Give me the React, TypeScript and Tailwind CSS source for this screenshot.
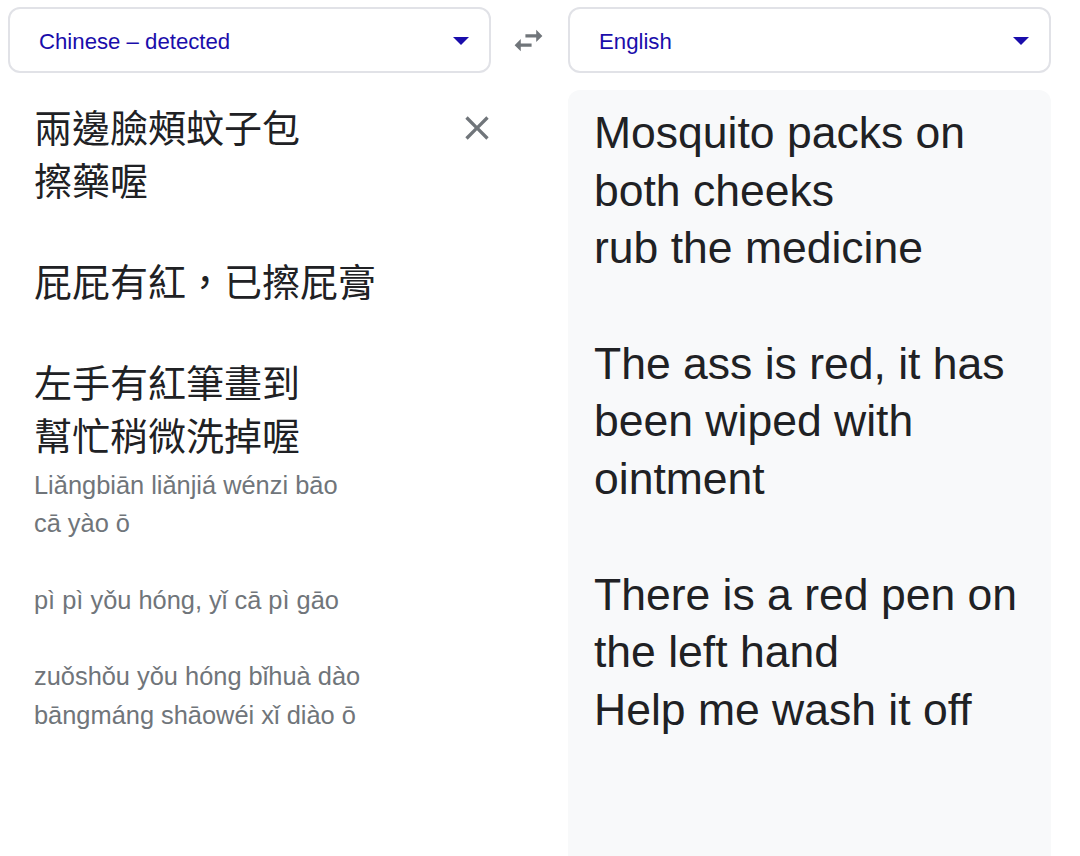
import React from "react";

const sans = "font-['Liberation_Sans','Noto_Sans_CJK_TC',sans-serif]";

function Caret() {
  return (
    <svg width="16" height="8" viewBox="0 0 16 8" className="shrink-0">
      <path d="M0 0h16L8 8z" fill="#1a0dab" />
    </svg>
  );
}

function LangSelect({ label }: { label: string }) {
  return (
    <div className="flex h-[66px] items-center justify-between rounded-[12px] border-2 border-[#e1e2e7] bg-white pl-[29px] pr-[20px] pt-[2px]">
      <span className={`${sans} mt-[2px] text-[22.2px] leading-none text-[#1a0dab]`}>{label}</span>
      <Caret />
    </div>
  );
}

const zh: (string | null)[] = [
  "兩邊臉頰蚊子包",
  "擦藥喔",
  null,
  "屁屁有紅，已擦屁膏",
  null,
  "左手有紅筆畫到",
  "幫忙稍微洗掉喔",
];

const pinyin: string[] = [
  "Liǎngbiān liǎnjiá wénzi bāo",
  "cā yào ō",
  "",
  "pì pì yǒu hóng, yǐ cā pì gāo",
  "",
  "zuǒshǒu yǒu hóng bǐhuà dào",
  "bāngmáng shāowéi xǐ diào ō",
];

const en: string[] = [
  "Mosquito packs on",
  "both cheeks",
  "rub the medicine",
  "",
  "The ass is red, it has",
  "been wiped with",
  "ointment",
  "",
  "There is a red pen on",
  "the left hand",
  "Help me wash it off",
];

export default function App() {
  return (
    <div className="h-[856px] w-[1080px] overflow-hidden bg-white">
      <div className="grid grid-cols-[483px_77px_483px] gap-y-[17px] pl-[8px] pt-[7px]">
        <LangSelect label="Chinese – detected" />
        <div className="flex items-center justify-center pr-[2px]">
          <svg width="37" height="37" viewBox="0 0 24 24">
            <path
              d="M6.99 11L3 15l3.99 4v-3H14v-2H6.99v-3zM21 9l-4-4v3h-7v2h7v3l4-4z"
              fill="#70757a"
            />
          </svg>
        </div>
        <LangSelect label="English" />

        <div className="flex items-start">
          <div className="flex-1 pl-[26px] pt-[9px]">
            <div className="font-['Noto_Sans_CJK_TC',sans-serif] text-[38px] text-[#202124]">
              {zh.map((l, i) =>
                l === null ? (
                  <div key={i} className="h-[48px]" />
                ) : (
                  <div key={i} className="h-[53px] whitespace-nowrap leading-[53px]">
                    {l}
                  </div>
                )
              )}
            </div>
            <div className={`${sans} mt-[6px] text-[25.4px] leading-[38.3px] text-[#70757a]`}>
              {pinyin.map((l, i) => (
                <div key={i} className="h-[38.3px] whitespace-nowrap">
                  {l}
                </div>
              ))}
            </div>
          </div>
          <div className="mt-[18px] mr-[-6px] flex h-[40px] w-[40px] items-center justify-center">
            <svg width="40" height="40" viewBox="0 0 24 24">
              <path
                d="M19 6.41L17.59 5 12 10.59 6.41 5 5 6.41 10.59 12 5 17.59 6.41 19 12 13.41 17.59 19 19 17.59 13.41 12z"
                fill="#70757a"
              />
            </svg>
          </div>
        </div>
        <div />
        <div className="min-h-[780px] rounded-t-[12px] bg-[#f8f9fa] pl-[26px] pt-[14px]">
          <div className={`${sans} text-[44.5px] leading-[57.7px] text-[#202124]`}>
            {en.map((l, i) => (
              <div key={i} className="h-[57.7px] whitespace-nowrap">
                {l}
              </div>
            ))}
          </div>
        </div>
      </div>
    </div>
  );
}
